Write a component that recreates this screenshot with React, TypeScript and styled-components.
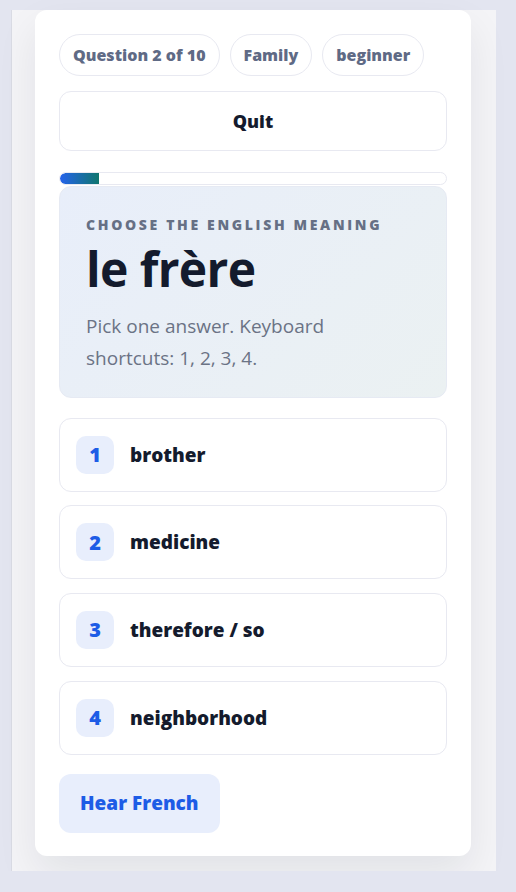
import * as React from 'react';
import styled, { createGlobalStyle } from 'styled-components';

const GlobalStyle = createGlobalStyle`
	html, body {
		margin: 0;
		padding: 0;
		background: #e3e5f0;
		font-family: 'Open Sans', 'Noto Sans', sans-serif;
	}
`;

const choices = ['brother', 'medicine', 'therefore / so', 'neighborhood'];

const App = () => {
	const current = 2;
	const total = 10;

	return (
		<>
			<GlobalStyle />
			<Frame>
				<Card>
					<PillRow>
						<Pill>
							Question {current} of {total}
						</Pill>
						<Pill>Family</Pill>
						<Pill>beginner</Pill>
					</PillRow>
					<QuitButton>Quit</QuitButton>
					<ProgressTrack>
						<ProgressFill style={{ width: `${(39 / 388) * 100}%` }} />
					</ProgressTrack>
					<PromptCard>
						<PromptLabel>Choose the English meaning</PromptLabel>
						<PromptWord>le frère</PromptWord>
						<PromptHint>Pick one answer. Keyboard shortcuts: 1, 2, 3, 4.</PromptHint>
					</PromptCard>
					<ChoiceList>
						{choices.map((c, i) => (
							<Choice key={c}>
								<KeyBadge>{i + 1}</KeyBadge>
								<ChoiceText>{c}</ChoiceText>
							</Choice>
						))}
					</ChoiceList>
					<HearButton>Hear French</HearButton>
				</Card>
			</Frame>
		</>
	);
};

export default App;

const Frame = styled.div`
	margin: 10px 0 0 11px;
	width: 485px;
	height: 861px;
	box-sizing: border-box;
	border-left: 1px solid #d9dbe4;
	background: #f4f4f7;
	padding-left: 23px;
`;

const Card = styled.div`
	width: 436px;
	box-sizing: border-box;
	background: #ffffff;
	border-radius: 12px;
	padding: 24px 24px 23px;
	box-shadow: 0 18px 40px rgba(15, 23, 42, 0.08);
	display: flex;
	flex-direction: column;
`;

const PillRow = styled.div`
	display: flex;
	gap: 10px;
`;

const Pill = styled.div`
	height: 42px;
	box-sizing: border-box;
	padding: 0 13px;
	border: 1px solid #e8e9f1;
	border-radius: 999px;
	display: flex;
	align-items: center;
	font-size: 16px;
	font-weight: 800;
	color: #5f6a85;
`;

const QuitButton = styled.button`
	margin-top: 15px;
	height: 60px;
	width: 100%;
	background: #fff;
	border: 1px solid #e8e9f1;
	border-radius: 12px;
	font-family: inherit;
	font-size: 18px;
	font-weight: 800;
	color: #141b2d;
`;

const ProgressTrack = styled.div`
	margin-top: 21px;
	height: 13px;
	box-sizing: border-box;
	border: 1px solid #e8e9f1;
	border-radius: 999px;
	overflow: hidden;
`;

const ProgressFill = styled.div`
	height: 100%;
	background: linear-gradient(90deg, #2563eb, #0f766e);
	border-radius: 999px 0 0 999px;
`;

const PromptCard = styled.div`
	margin-top: 1px;
	padding: 28px 26px 23px;
	border-radius: 12px;
	border: 1px solid #e6eaf3;
	background: linear-gradient(135deg, #e8eefa, #ebf1f2);
`;

const PromptLabel = styled.div`
	font-size: 14px;
	font-weight: 800;
	letter-spacing: 0.19em;
	text-transform: uppercase;
	color: #667085;
`;

const PromptWord = styled.div`
	margin-top: 6px;
	font-size: 48px;
	font-weight: 700;
	letter-spacing: -0.6px;
	line-height: 1.2;
	color: #141b2d;
`;

const PromptHint = styled.div`
	margin-top: 12px;
	max-width: 300px;
	font-size: 19px;
	line-height: 32px;
	color: #6b7385;
`;

const ChoiceList = styled.div`
	margin-top: 20px;
	display: flex;
	flex-direction: column;
	gap: 13.67px;
`;

const Choice = styled.div`
	height: 74px;
	box-sizing: border-box;
	padding: 0 16px;
	border: 1px solid #e8e9f1;
	border-radius: 12px;
	display: flex;
	align-items: center;
	gap: 16px;
`;

const KeyBadge = styled.span`
	width: 38px;
	height: 38px;
	border-radius: 10px;
	background: #e8eefc;
	color: #1d5ce6;
	font-size: 20px;
	font-weight: 800;
	display: flex;
	align-items: center;
	justify-content: center;
`;

const ChoiceText = styled.span`
	font-size: 19px;
	font-weight: 800;
	color: #141b2d;
`;

const HearButton = styled.button`
	margin-top: 19px;
	align-self: flex-start;
	height: 59px;
	padding: 0 21px;
	border: none;
	border-radius: 12px;
	background: #e8eefc;
	font-family: inherit;
	font-size: 19px;
	font-weight: 800;
	color: #1d5ce6;
`;
